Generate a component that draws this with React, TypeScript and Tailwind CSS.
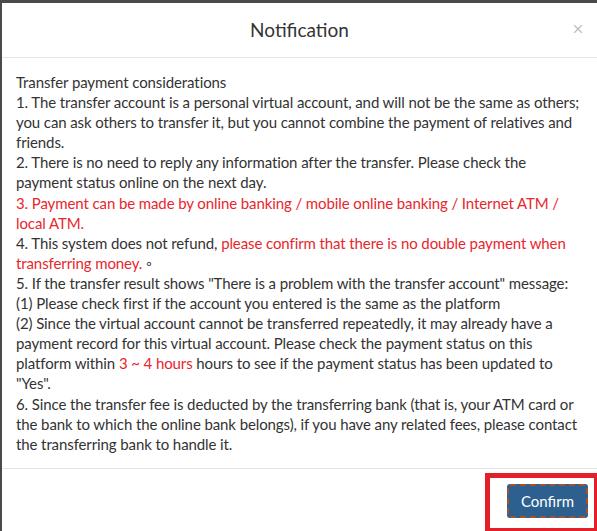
import { X } from "lucide-react";

const Red = ({ children }: { children: React.ReactNode }) => (
  <span className="text-[#e8262d]">{children}</span>
);

const App = () => {
  return (
    <div
      className="w-[597px] h-[531px] bg-[#4a4a4a] pt-[3px] pl-[2px] overflow-hidden"
      style={{ fontFamily: 'Lato, "Noto Sans", sans-serif' }}
    >
      <div className="relative h-full bg-white flex flex-col">
        {/* header */}
        <div className="relative shrink-0 h-[55px] flex items-center justify-center border-b border-[#e5e5e5]">
          <div className="text-[19px] text-[#333]">Notification</div>
          <X className="absolute right-[12px] top-[19px] w-[14px] h-[14px] text-[#bbb]" strokeWidth={2} />
        </div>

        {/* body */}
        <div className="shrink-0 pl-[14px] pr-[12px] pt-[14px] pb-[14px] text-[15px] leading-[20.1px] tracking-[-0.1px] text-[#333]">
          <div>Transfer payment considerations</div>
          <div>
            1. The transfer account is a personal virtual account, and will not be the same as others; you can ask others to transfer it, but you cannot combine the payment of relatives and friends.
          </div>
          <div>
            2. There is no need to reply any information after the transfer. Please check the payment status online on the next day.
          </div>
          <div>
            <Red>3. Payment can be made by online banking / mobile online banking / Internet ATM / local ATM.</Red>
          </div>
          <div>
            4. This system does not refund,{" "}
            <Red>please confirm that there is no double payment when transferring money.</Red> ◦
          </div>
          <div>
            5. If the transfer result shows "There is a problem with the transfer account" message:
          </div>
          <div>(1) Please check first if the account you entered is the same as the platform</div>
          <div>
            (2) Since the virtual account cannot be transferred repeatedly, it may already have a payment record for this virtual account. Please check the payment status on this platform within{" "}
            <Red>3 ~ 4 hours</Red> hours to see if the payment status has been updated to "Yes".
          </div>
          <div>
            6. Since the transfer fee is deducted by the transferring bank (that is, your ATM card or the bank to which the online bank belongs), if you have any related fees, please contact the transferring bank to handle it.
          </div>
        </div>

        {/* footer */}
        <div className="flex-1 border-t border-[#e5e5e5] flex justify-end items-start pt-[15px] pr-[9px]">
          <button className="h-[34px] px-[12px] bg-[#2d5f8f] text-white text-[15px] rounded-[3px] border-2 border-dashed border-[#a4522c]">
            Confirm
          </button>
        </div>

        {/* annotation */}
        <div className="absolute left-[483px] top-[470px] w-[114px] h-[60px] border-[5px] border-[#e3202a] pointer-events-none" />
      </div>
    </div>
  );
};

export default App;
